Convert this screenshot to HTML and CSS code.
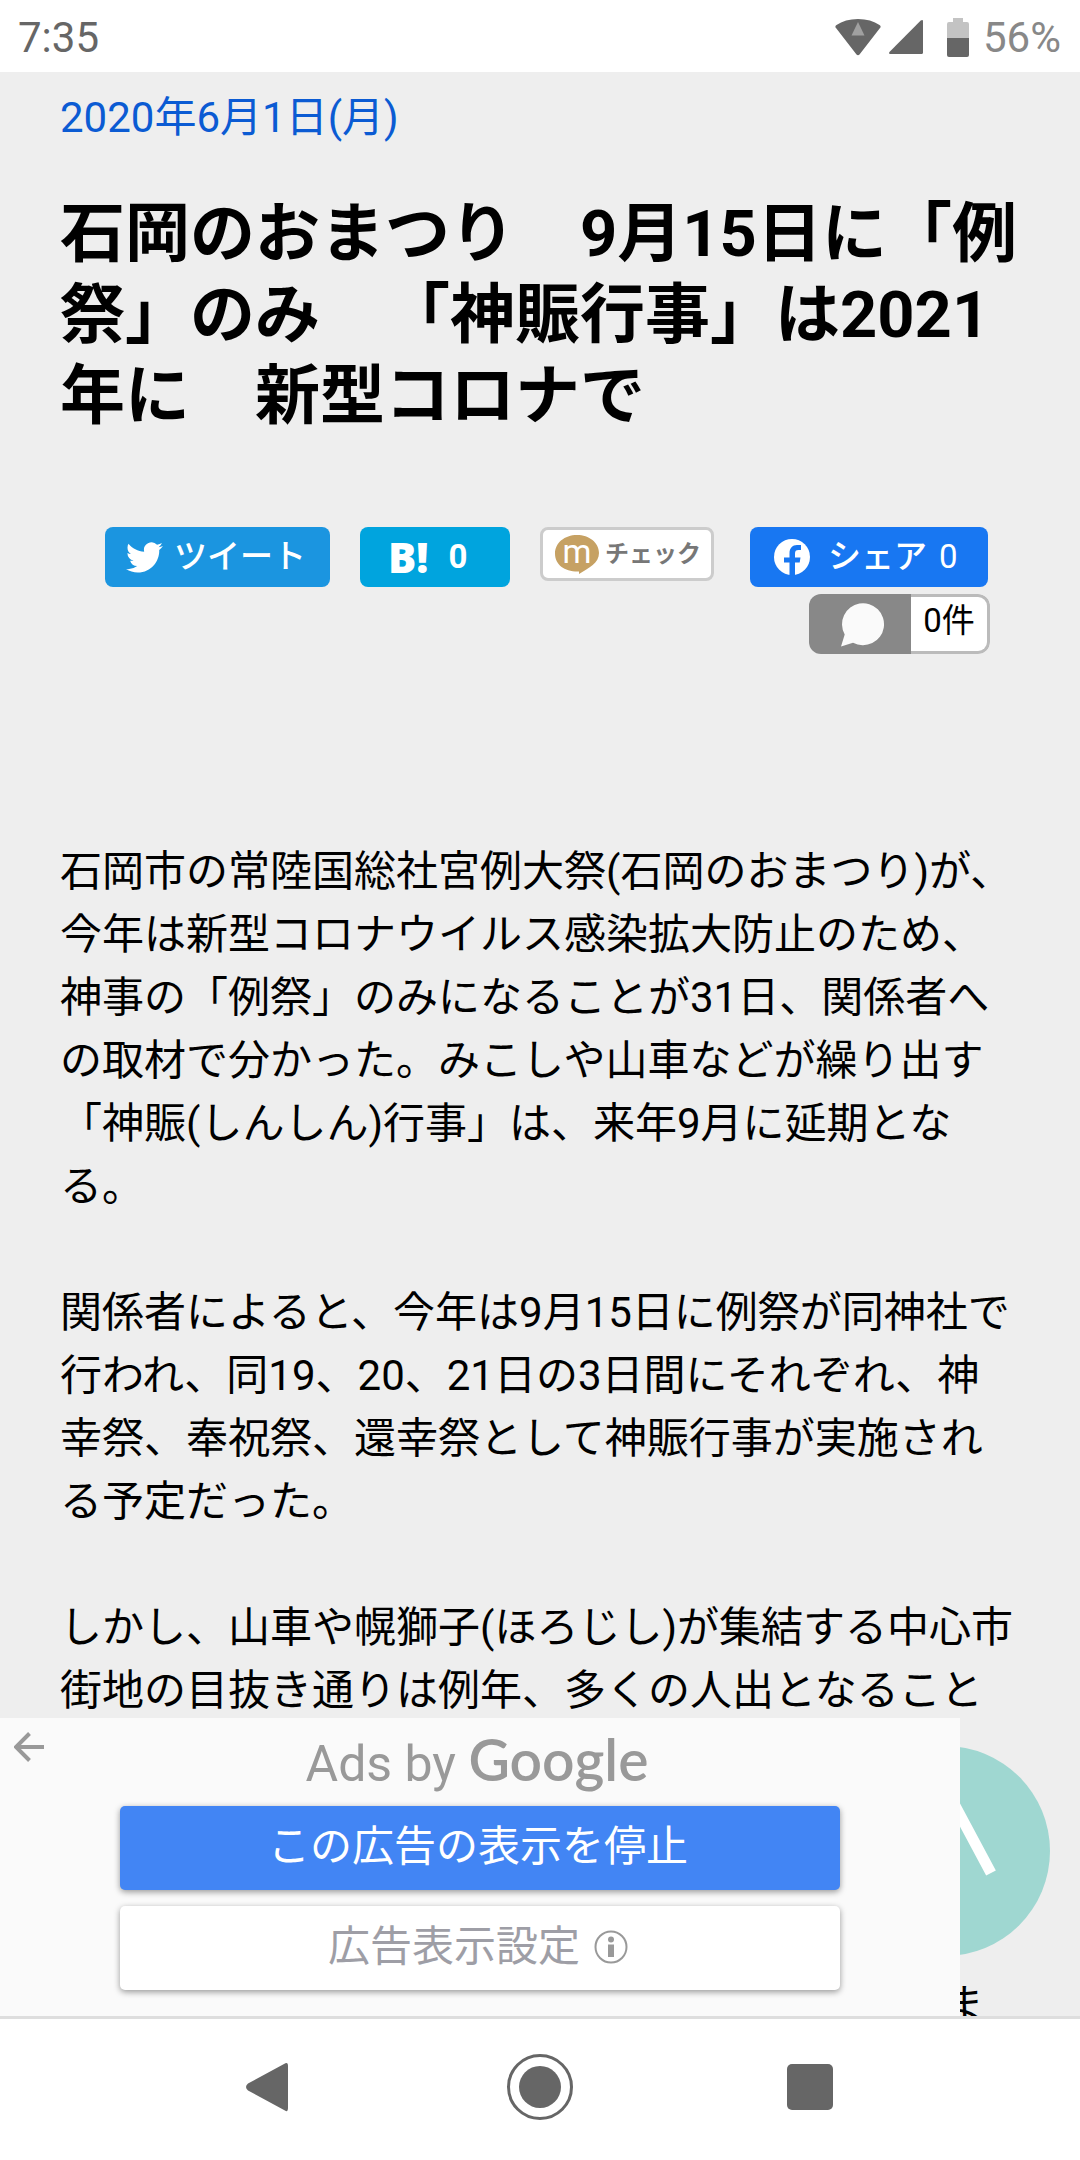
FILE: index.html
```html
<!DOCTYPE html>
<html lang="ja">
<head>
    <meta charset="UTF-8">
    <meta name="viewport" content="width=device-width, initial-scale=1.0">
    <title>石岡のおまつり</title>
    <link rel="stylesheet" href="styles.css">
</head>
<body>
    <header class="status-bar">
        <span class="clock">7:35</span>
        <svg class="wifi" width="46" height="37" viewBox="0 0 46 37">
            <path d="M1 9Q-.5 7.500 1.500 6Q10 0 23 0T44.500 6Q46.500 7.500 45 9L24.500 35.500Q23 37 21.500 35.500Z" fill="#666"/>
            <path d="M23 3L29.500 16.500H16.500Z" fill="#a0a0a0"/>
        </svg>
        <svg class="signal" width="34" height="34" viewBox="0 0 34 34">
            <path d="M34 1.500V32.500Q34 34 32.500 34H1.500Q-1 34 .7 31.800L31.500 .8Q34-1 34 1.500Z" fill="#666"/>
        </svg>
        <svg class="battery" width="22" height="39" viewBox="0 0 22 39">
            <path d="M6 0H16V4H20Q22 4 22 6V20H0V6Q0 4 2 4H6Z" fill="#c3c3c3"/>
            <path d="M0 20H22V37Q22 39 20 39H2Q0 39 0 37Z" fill="#666"/>
        </svg>
        <span class="level">56%</span>
    </header>

    <main class="page">
        <article class="article">
            <a class="date" href="#">2020年6月1日(月)</a>
            <h1>石岡のおまつり　9月15日に「例祭」のみ　「神賑行事」は2021年に　新型コロナで</h1>

            <div class="share">
                <a class="share-btn tweet" href="#">
                    <svg width="37" height="31" viewBox="0 0 24 20">
                        <path d="M23.950 2.570a10 10 0 0 1-2.820.77 4.960 4.960 0 0 0 2.160-2.720c-.95.550-2 .96-3.130 1.180a4.920 4.920 0 0 0-8.380 4.480C7.690 6.100 4.070 4.140 1.640 1.160a4.820 4.820 0 0 0-.67 2.480c0 1.700.87 3.210 2.190 4.090a4.900 4.900 0 0 1-2.230-.62v.06a4.920 4.920 0 0 0 3.950 4.830 5 5 0 0 1-2.210.08 4.940 4.940 0 0 0 4.600 3.420A9.870 9.870 0 0 1 0 17.540a13.990 13.990 0 0 0 7.560 2.210c9.050 0 14-7.500 14-13.980 0-.21 0-.42-.02-.63a9.940 9.940 0 0 0 2.410-2.570z" fill="#fff"/>
                    </svg>
                    ツイート
                </a>
                <a class="share-btn hatena" href="#"><span class="hatena-mark">B!</span>0</a>
                <a class="share-btn mixi" href="#">
                    <span class="mixi-mark">
                        <svg width="44" height="39" viewBox="0 0 44 39">
                            <path d="M22 0C34 0 44 7.500 44 18C44 28 34 33 24 39V36.500C10 37 0 30 0 18.500C0 8 9.500 0 22 0Z" fill="#c6a163"/>
                        </svg>
                        <span class="mixi-m">m</span>
                    </span>
                    チェック
                </a>
                <a class="share-btn facebook" href="#">
                    <svg width="36" height="36" viewBox="0 0 36 36">
                        <circle cx="18" cy="18" r="18" fill="#fff"/>
                        <path d="M15.500 36V23.500H10V18.500H15.500V14.500C15.500 9 18.500 6 23 6H27V11H24.500C22 11 21 12 21 14.500V18.500H26.500L25.700 23.500H21V36Z" fill="#1877f2"/>
                    </svg>
                    シェア<span class="count">0</span>
                </a>
                <a class="comments" href="#">
                    <span class="comments-icon">
                        <svg width="44" height="44" viewBox="0 0 44 44">
                            <path d="M0 43.500L3.700 31.500A21 21 0 1 1 12 39.700Z" fill="#fafafa"/>
                        </svg>
                    </span>
                    <span class="comments-count">0件</span>
                </a>
            </div>

            <div class="body-text">
                <p>石岡市の常陸国総社宮例大祭(石岡のおまつり)が、今年は新型コロナウイルス感染拡大防止のため、神事の「例祭」のみになることが31日、関係者への取材で分かった。みこしや山車などが繰り出す「神賑(しんしん)行事」は、来年9月に延期となる。</p>
                <p>関係者によると、今年は9月15日に例祭が同神社で行われ、同19、20、21日の3日間にそれぞれ、神幸祭、奉祝祭、還幸祭として神賑行事が実施される予定だった。</p>
                <p>しかし、山車や幌獅子(ほろじし)が集結する中心市街地の目抜き通りは例年、多くの人出となること</p>
                <p class="under-ad">ま</p>
            </div>
        </article>

        <button class="to-top" aria-label="ページの先頭へ">
            <svg width="210" height="210" viewBox="0 0 210 210">
                <path d="M59 127L105 41L151 127" fill="none" stroke="#fff" stroke-width="11"/>
            </svg>
        </button>

        <aside class="ad">
            <button class="ad-back" aria-label="戻る">
                <svg width="30" height="30" viewBox="0 0 30 30">
                    <path d="M15.500 1.500L2 15L15.500 28.500M2 15H30" fill="none" stroke="#999" stroke-width="4"/>
                </svg>
            </button>
            <div class="ad-title">Ads by <span class="google">Google</span></div>
            <button class="ad-btn stop">この広告の表示を停止</button>
            <button class="ad-btn settings">
                広告表示設定
                <svg width="34" height="34" viewBox="0 0 34 34">
                    <circle cx="17" cy="17" r="15.500" fill="none" stroke="#999" stroke-width="2"/>
                    <circle cx="17" cy="9.500" r="3" fill="#999"/>
                    <rect x="14" y="14.500" width="6" height="12.500" fill="#999"/>
                </svg>
            </button>
        </aside>
    </main>

    <nav class="nav-bar">
        <button aria-label="Back">
            <svg width="48" height="68" viewBox="0 0 48 68">
                <path d="M42 13V55Q42 60 38 57L2 37.500Q-2 34 2 30.500L38 11Q42 8 42 13Z" fill="#666"/>
            </svg>
        </button>
        <button aria-label="Home">
            <svg width="68" height="68" viewBox="0 0 68 68">
                <circle cx="34" cy="34" r="31.500" fill="none" stroke="#666" stroke-width="3"/>
                <circle cx="34" cy="34" r="21" fill="#666"/>
            </svg>
        </button>
        <button aria-label="Recent apps">
            <svg width="46" height="68" viewBox="0 0 46 68">
                <rect y="11" width="46" height="46" rx="5" fill="#666"/>
            </svg>
        </button>
    </nav>
</body>
</html>
```
FILE: styles.css
```css
* {
    box-sizing: border-box;
}
body {
    display: flex;
    flex-direction: column;
    height: 100vh;
    margin: 0;
    background: #fff;
    color: #000;
    font-family: Roboto, "Noto Sans CJK JP", sans-serif;
    font-size: 42px;
    line-height: 63px;
    text-spacing-trim: space-all;
}
button {
    padding: 0;
    border: 0;
    background: none;
    font: inherit;
    cursor: pointer;
}
a {
    text-decoration: none;
}
svg {
    display: block;
    flex: none;
}

/* status bar */
.status-bar {
    display: flex;
    align-items: center;
    flex: none;
    height: 72px;
    padding: 2px 19px 0 18px;
    color: #666;
}
.clock {
    margin-right: auto;
}
.signal {
    margin: 0 24px 0 8px;
}
.level {
    margin-left: 14px;
    color: #888;
}

/* article */
.page {
    position: relative;
    flex: 1;
    min-height: 0;
    overflow: hidden;
    background: #eee;
}
.article {
    padding: 14px 60px 0;
}
.date {
    display: block;
    color: #0b5bd3;
}
h1 {
    margin: 45px 0 90px;
    font-size: 65px;
    line-height: 81px;
}
.share {
    display: flex;
    flex-wrap: wrap;
    align-items: flex-start;
    gap: 7px 30px;
    padding: 0 30px 0 45px;
    font-size: 33px;
}
.share-btn {
    display: flex;
    align-items: center;
    height: 60px;
    border-radius: 8px;
    color: #fff;
    font-weight: 500;
    line-height: 56px;
}
.tweet {
    gap: 11px;
    width: 225px;
    padding-left: 21px;
    background: #1b95e0;
}
.hatena {
    gap: 20px;
    width: 150px;
    padding-left: 28px;
    background: #00a4de;
    font-weight: 700;
}
.hatena-mark {
    font-family: "Open Sans", sans-serif;
    font-size: 42px;
    font-weight: 800;
}
.mixi {
    gap: 6px;
    width: 174px;
    height: 54px;
    padding-left: 12px;
    border: 3px solid #ccc;
    background: #fff;
    color: #777;
    font-size: 24px;
    font-weight: 700;
}
.mixi-mark {
    position: relative;
}
.mixi-m {
    position: absolute;
    inset: 0;
    color: #fff;
    font-size: 33px;
    font-weight: 400;
    line-height: 33px;
    text-align: center;
}
.facebook {
    gap: 18px;
    width: 238px;
    margin-left: 6px;
    padding-left: 24px;
    background: #1877f2;
}
.count {
    margin-left: -6px;
    font-weight: 400;
}
.comments {
    display: flex;
    width: 181px;
    height: 60px;
    margin-left: auto;
    border-radius: 12px;
    overflow: hidden;
    color: #000;
    line-height: 48px;
}
.comments-icon {
    width: 102px;
    padding: 9px 0 0 32px;
    background: #888;
}
.comments-count {
    flex: 1;
    border: 3px solid #bbb;
    border-left: 0;
    border-radius: 0 12px 12px 0;
    background: #fff;
    text-align: center;
}
.body-text {
    margin-top: 186px;
}
.body-text p {
    margin: 0 0 63px;
}
.body-text .under-ad {
    margin-top: 252px;
    text-indent: 21em;
}

/* scroll to top */
.to-top {
    position: absolute;
    right: 30px;
    bottom: 60px;
    border-radius: 50%;
    background: #9fd7d1;
}

/* ad anchored to the bottom of the page */
.ad {
    position: absolute;
    left: 0;
    right: 120px;
    bottom: 0;
    display: flex;
    flex-direction: column;
    align-items: center;
    gap: 16px;
    padding: 10px 0 26px;
    background: #fafafa;
}
.ad-back {
    position: absolute;
    top: 14px;
    left: 14px;
}
.ad-title {
    height: 62px;
    padding-right: 6px;
    color: #999;
    font-size: 50px;
    line-height: 62px;
}
.google {
    font-family: Lato, sans-serif;
    font-size: 57px;
    font-weight: 600;
}
.ad-btn {
    display: flex;
    align-items: center;
    justify-content: center;
    gap: 14px;
    width: 75%;
    height: 84px;
    padding: 0 4px 3px 0;
    border-radius: 5px;
    box-shadow: 0 2px 6px rgba(0, 0, 0, 0.4);
}
.stop {
    background: #4285f4;
    color: #fff;
}
.settings {
    background: #fff;
    color: #9e9ea6;
}

/* system navigation */
.nav-bar {
    display: grid;
    grid-template-columns: repeat(3, 1fr);
    align-items: center;
    justify-items: center;
    flex: none;
    height: 144px;
    padding: 0 12.5% 5px;
    border-top: 3px solid #dedede;
}
```
